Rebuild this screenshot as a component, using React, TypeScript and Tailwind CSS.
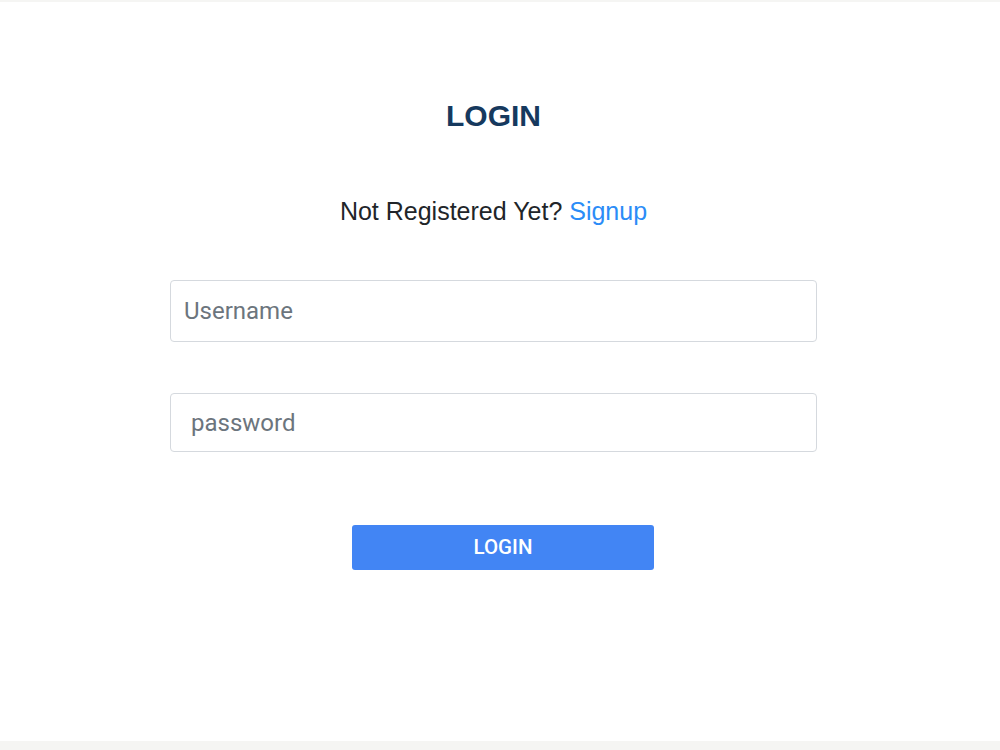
import React from 'react';

export default function App() {
  return (
    <div className="w-[1000px] h-[750px] bg-[#f5f5f3] pt-[2px] pb-[9px] flex flex-col">
      <div className="flex-1 bg-white flex flex-col items-center pr-[13px]">
        <h1 className="mt-[96px] text-[30px] leading-[36px] font-bold text-[#16395e] font-['Liberation_Sans',Arial,sans-serif]">
          LOGIN
        </h1>
        <p className="mt-[62px] text-[25px] leading-[30px] text-[#212529] font-['Liberation_Sans',Arial,sans-serif]">
          Not Registered Yet? <a href="#" className="text-[#2b8cf7]">Signup</a>
        </p>
        <form className="mt-[54px] w-[647px] flex flex-col font-['Roboto',sans-serif]" onSubmit={(e) => e.preventDefault()}>
          <input
            type="text"
            placeholder="Username"
            className="h-[62px] w-full border border-[#d5d9de] rounded-[4px] px-[13px] text-[24px] text-[#495057] placeholder:text-[#6c757d] outline-none"
          />
          <input
            type="password"
            placeholder="password"
            className="mt-[51px] h-[59px] w-full border border-[#d5d9de] rounded-[4px] px-[20px] text-[24px] text-[#495057] placeholder:text-[#6c757d] outline-none"
          />
          <button
            type="submit"
            className="mt-[73px] ml-[182px] w-[302px] h-[45px] bg-[#4285f4] rounded-[3px] text-white text-[20.5px] font-medium"
          >
            LOGIN
          </button>
        </form>
      </div>
    </div>
  );
}
